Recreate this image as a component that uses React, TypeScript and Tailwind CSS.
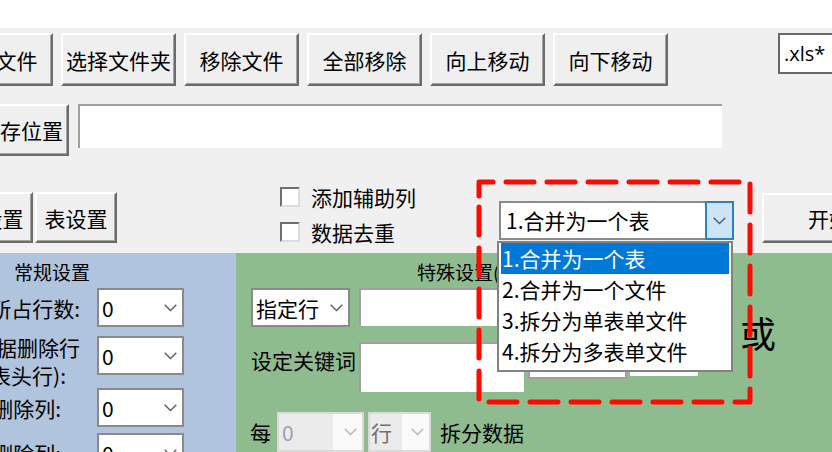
import React from "react";

const Chevron = ({ color = "#5a5a5a" }: { color?: string }) => (
  <svg width="13" height="8" viewBox="0 0 13 8" fill="none" className="shrink-0">
    <polyline points="0.7,0.7 6.5,6.5 12.3,0.7" stroke={color} strokeWidth="1.3" />
  </svg>
);

function Btn({ className = "", children }: { className?: string; children: React.ReactNode }) {
  return (
    <div
      className={
        "flex shrink-0 items-center justify-center whitespace-nowrap border-2 border-t-white border-l-white border-r-[#6b6b6b] border-b-[#6b6b6b] bg-[#efefef] shadow-[inset_-1px_-1px_0_#a3a3a3] " +
        className
      }
    >
      {children}
    </div>
  );
}

function Combo({ className = "", value }: { className?: string; value: string }) {
  return (
    <div
      className={
        "flex shrink-0 items-center justify-between border-2 border-[#8a8a8a] bg-white pl-[3px] pr-[5px] " +
        className
      }
    >
      <span className="whitespace-nowrap">{value}</span>
      <Chevron />
    </div>
  );
}

function Check({ label }: { label: string }) {
  return (
    <div className="flex h-[20px] items-center gap-[11px]">
      <div className="h-[20px] w-[20px] shrink-0 border-2 border-t-[#6e6e6e] border-l-[#6e6e6e] border-r-[#dcdcdc] border-b-[#dcdcdc] bg-white" />
      <span className="whitespace-nowrap leading-[20px]">{label}</span>
    </div>
  );
}

export default function App() {
  return (
    <div className="relative h-[452px] w-[832px] overflow-hidden bg-[#f0f0f0] font-['Noto_Sans_CJK_SC',sans-serif] text-[21px] leading-[28px] text-black">
      <div className="h-[28px] bg-white" />

      {/* row 1 */}
      <div className="mt-[5px] flex h-[53px] items-start gap-[8px]">
        <Btn className="ml-[-62px] h-[53px] w-[115px]">添加文件</Btn>
        <Btn className="h-[53px] w-[115px]">选择文件夹</Btn>
        <Btn className="h-[53px] w-[115px]">移除文件</Btn>
        <Btn className="h-[53px] w-[115px]">全部移除</Btn>
        <Btn className="h-[53px] w-[115px]">向上移动</Btn>
        <Btn className="h-[53px] w-[115px]">向下移动</Btn>
        <div className="ml-[102px] flex h-[41px] w-[90px] shrink-0 items-center border-2 border-[#6a6a6a] bg-white pl-[4px] font-['Open_Sans',sans-serif] text-[20px]">
          .xls*
        </div>
      </div>

      {/* row 2 */}
      <div className="mt-[18px] flex items-start">
        <div className="flex h-[52px] w-[96px] shrink-0 items-center justify-end whitespace-nowrap border-2 border-t-white border-l-white border-r-[#6b6b6b] border-b-[#6b6b6b] bg-[#efefef] pr-[4px] shadow-[inset_-1px_-1px_0_#a3a3a3] ml-[-27px]">
          保存位置
        </div>
        <div className="ml-[9px] h-[44px] w-[644px] border-t-2 border-l-2 border-[#a0a0a0] bg-white" />
      </div>

      {/* row 3 */}
      <div className="flex h-[97px] items-start">
        <Btn className="ml-[-49px] mt-[36px] h-[51px] w-[82px]">列设置</Btn>
        <Btn className="ml-[2px] mt-[36px] h-[51px] w-[82px]">表设置</Btn>
        <div className="ml-[163px] mt-[31px] flex w-[200px] shrink-0 flex-col gap-[15px]">
          <Check label="添加辅助列" />
          <Check label="数据去重" />
        </div>
        <div className="ml-[19px] mt-[45px] flex h-[39px] w-[235px] shrink-0 border-2 border-[#8a8a8a] bg-white">
          <div className="flex-1 whitespace-nowrap pl-[5px] leading-[35px]">1.合并为一个表</div>
          <div className="-my-[2px] -mr-[2px] flex h-[39px] w-[29px] items-center justify-center border-2 border-[#2f7fc1] bg-[#cce4f7]">
            <Chevron color="#555" />
          </div>
        </div>
        <Btn className="ml-[28px] mt-[37px] h-[50px] w-[134px]">开始</Btn>
      </div>

      {/* bottom panels */}
      <div className="flex h-[199px]">
        <div className="flex w-[236px] shrink-0 flex-col bg-[#b0c4de]">
          <div className="mt-[7px] pl-[14px] text-[19px] leading-[24px]">常规设置</div>
          <div className="mt-[4px] flex h-[39px] items-center">
            <div className="flex w-[80px] shrink-0 justify-end whitespace-nowrap">表头所占行数:</div>
            <Combo className="ml-[17px] h-[39px] w-[87px]" value="0" />
          </div>
          <div className="mt-[9px] flex h-[39px] items-start">
            <div className="mt-[-3px] flex h-[39px] w-[80px] shrink-0 flex-col items-end">
              <div className="whitespace-nowrap leading-[28px]">数据删除行</div>
              <div className="whitespace-nowrap pr-[14px] leading-[28px]">(表头行):</div>
            </div>
            <Combo className="ml-[17px] h-[39px] w-[87px]" value="0" />
          </div>
          <div className="mt-[13px] flex h-[39px] items-center">
            <div className="flex w-[80px] shrink-0 justify-end whitespace-nowrap pr-[19px]">前删除列:</div>
            <Combo className="ml-[17px] h-[39px] w-[87px]" value="0" />
          </div>
          <div className="mt-[6px] flex h-[39px] items-center">
            <div className="flex w-[80px] shrink-0 justify-end whitespace-nowrap pr-[19px]">后删除列:</div>
            <Combo className="ml-[17px] h-[39px] w-[87px]" value="0" />
          </div>
        </div>

        <div className="flex flex-1 flex-col bg-[#8fbc8f]">
          <div className="mt-[7px] whitespace-nowrap pl-[181px] text-[19px] leading-[24px]">特殊设置(二选一)</div>
          <div className="mt-[4px] flex items-start pl-[15px]">
            <Combo className="h-[39px] w-[99px]" value="指定行" />
            <div className="ml-[9px] h-[38px] w-[170px] shrink-0 border-t-2 border-l-2 border-[#a0a0a0] bg-white" />
          </div>
          <div className="mt-[15px] flex items-start pl-[15px]">
            <div className="mt-[4px] w-[108px] shrink-0 whitespace-nowrap">设定关键词</div>
            <div className="h-[50px] w-[165px] shrink-0 border-t-2 border-l-2 border-[#a0a0a0] bg-white" />
            <div className="ml-[4px] h-[37px] w-[99px] shrink-0 border-2 border-[#a0a0a0] bg-white" />
            <div className="ml-[3px] h-[34px] w-[68px] shrink-0 bg-white" />
            <div className="ml-[42px] mt-[-28px] text-[36px] leading-[36px]">或</div>
          </div>
          <div className="mt-[20px] flex h-[40px] items-center pl-[14px]">
            <span>每</span>
            <div className="ml-[6px] flex h-[40px] w-[87px] shrink-0 items-center border-2 border-[#dadada] bg-[#fafafa] pr-[5px]">
              <div className="flex h-full w-[54px] items-center bg-[#ebebeb] pl-[3px] text-[#9aa0b4]">0</div>
              <div className="flex-1" />
              <Chevron color="#b4b4b4" />
            </div>
            <div className="ml-[4px] flex h-[40px] w-[63px] shrink-0 items-center border-2 border-[#dadada] bg-[#fafafa] pr-[5px]">
              <div className="flex h-full w-[32px] items-center bg-[#ebebeb] pl-[1px] text-[#707070]">行</div>
              <div className="flex-1" />
              <Chevron color="#b4b4b4" />
            </div>
            <span className="ml-[9px] whitespace-nowrap">拆分数据</span>
          </div>
        </div>
      </div>

      {/* dropdown list */}
      <div className="absolute left-[497px] top-[241px] h-[131px] w-[236px] border-2 border-[#828282] bg-white px-[2px]">
        <div className="h-[31px] whitespace-nowrap bg-[#0078d7] pl-[1px] leading-[31px] text-white">1.合并为一个表</div>
        <div className="h-[31px] whitespace-nowrap pl-[1px] leading-[31px]">2.合并为一个文件</div>
        <div className="h-[31px] whitespace-nowrap pl-[1px] leading-[31px]">3.拆分为单表单文件</div>
        <div className="h-[31px] whitespace-nowrap pl-[1px] leading-[31px]">4.拆分为多表单文件</div>
      </div>

      {/* red dashed annotation */}
      <svg className="pointer-events-none absolute left-0 top-0" width="832" height="452">
        <path
          d="M479 196 L479 182 L750 182 L750 402 L479 402 Z"
          fill="none"
          stroke="#ff0a00"
          strokeWidth="5"
          strokeLinecap="round"
          strokeLinejoin="round"
          strokeDasharray="28 13"
        />
      </svg>
    </div>
  );
}
